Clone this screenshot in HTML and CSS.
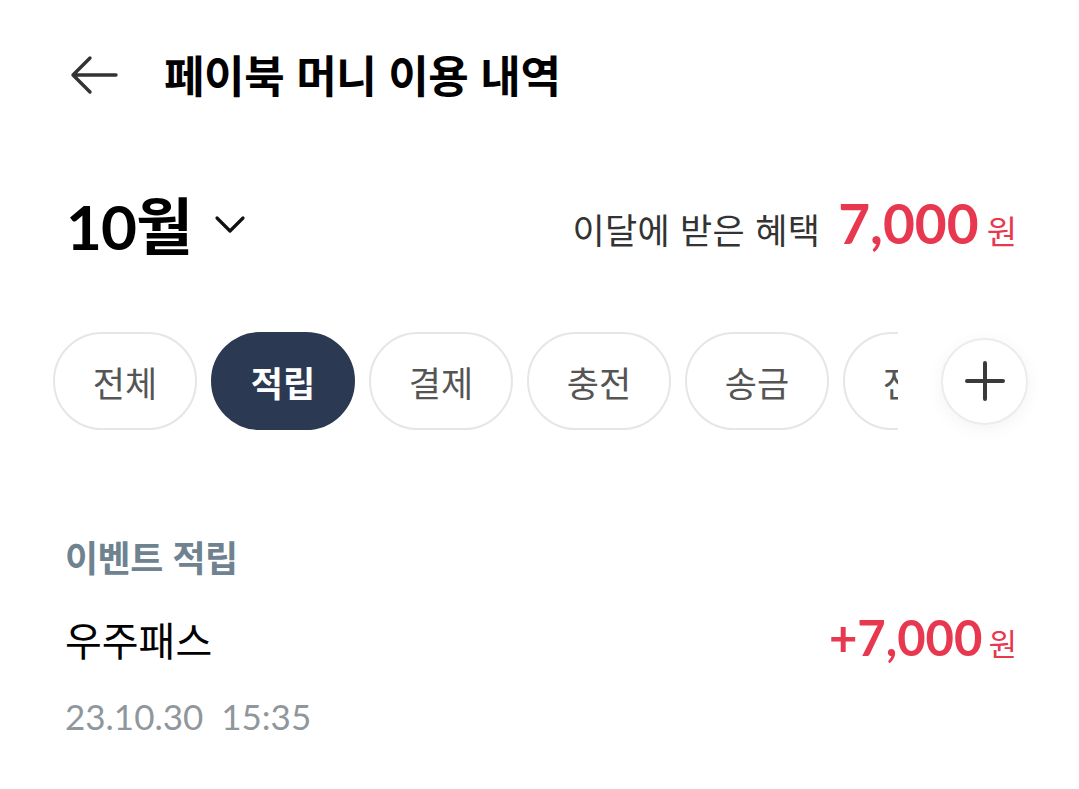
FILE: index.html
```html
<!DOCTYPE html>
<html lang="ko">
<head>
    <meta charset="utf-8">
    <title>페이북 머니 이용 내역</title>
    <link rel="stylesheet" href="styles.css">
</head>
<body>
    <div class="page">
        <header class="top-bar">
            <button class="back-btn" type="button" aria-label="뒤로">
                <svg width="52" height="40" viewBox="0 0 52 40">
                    <path d="M48 20 H5 M22 3 L5 20 L22 37" fill="none" stroke="#333" stroke-width="3.4" stroke-linecap="round" stroke-linejoin="round"/>
                </svg>
            </button>
            <h1 class="title">페이북 머니 이용 내역</h1>
        </header>

        <div class="month-row">
            <div class="month">
                <span class="month-text">10월</span>
                <svg class="chevron" width="32" height="20" viewBox="0 0 32 20">
                    <path d="M3 3 L16 16 L29 3" fill="none" stroke="#111" stroke-width="3.2" stroke-linecap="round" stroke-linejoin="round"/>
                </svg>
            </div>
            <div class="benefit">
                <span class="benefit-label">이달에 받은 혜택</span>
                <span class="amount">7,000</span><span class="won">원</span>
            </div>
        </div>

        <div class="filter-bar">
            <div class="chips">
                <span class="chip">전체</span>
                <span class="chip active">적립</span>
                <span class="chip">결제</span>
                <span class="chip">충전</span>
                <span class="chip">송금</span>
                <span class="chip">전환</span>
            </div>
            <div class="more-wrap">
                <button class="more-btn" type="button" aria-label="더보기">
                    <svg width="40" height="40" viewBox="0 0 40 40">
                        <path d="M20 2 V38 M2 20 H38" stroke="#3a3a3a" stroke-width="4" stroke-linecap="round"/>
                    </svg>
                </button>
            </div>
        </div>

        <section class="history">
            <h2 class="group-label">이벤트 적립</h2>
            <div class="item">
                <div class="item-row">
                    <span class="item-name">우주패스</span>
                    <span class="item-amount"><span class="plus-amount">+7,000</span><span class="won small">원</span></span>
                </div>
                <div class="item-date">23.10.30&nbsp;&nbsp;15:35</div>
            </div>
        </section>
    </div>
</body>
</html>
```

FILE: styles.css
```css
* {
    box-sizing: border-box;
}

body {
    margin: 0;
    background-color: #fff;
    font-family: "Lato", "Noto Sans CJK KR", sans-serif;
    color: #111;
}

.page {
    width: 1079px;
    height: 789px;
    overflow: hidden;
}

.top-bar {
    display: flex;
    align-items: center;
    height: 150px;
    padding: 0 0 0 68px;
}

.back-btn {
    border: none;
    background: none;
    padding: 0;
    width: 52px;
    height: 40px;
    margin-right: 44px;
}

.title {
    margin: 0;
    font-family: "Noto Sans CJK KR", sans-serif;
    font-size: 44px;
    font-weight: 700;
    letter-spacing: -0.4px;
    color: #000;
    position: relative;
    top: -1px;
}

.month-row {
    display: flex;
    align-items: center;
    justify-content: space-between;
    padding: 0 62px 0 66px;
    height: 145px;
}

.month {
    display: flex;
    align-items: center;
}

.month-text {
    font-family: "Lato", "Noto Sans CJK KR", sans-serif;
    font-size: 62px;
    font-weight: 700;
    letter-spacing: -1px;
    color: #000;
}

.chevron {
    margin-left: 22px;
    margin-top: 4px;
}

.benefit {
    display: flex;
    align-items: baseline;
}

.benefit-label {
    font-family: "Noto Sans CJK KR", sans-serif;
    font-size: 35px;
    letter-spacing: 0.3px;
    color: #333;
    margin-right: 18px;
}

.amount {
    font-size: 55px;
    font-weight: 700;
    color: #e8384f;
}

.won {
    font-family: "Noto Sans CJK KR", sans-serif;
    font-size: 33px;
    color: #e8384f;
    margin-left: 8px;
}

.filter-bar {
    position: relative;
    height: 98px;
    margin-top: 37px;
    padding-left: 53px;
}

.chips {
    display: flex;
    gap: 14px;
    width: 845px;
    overflow: hidden;
}

.chip {
    flex: none;
    width: 144px;
    height: 98px;
    border: 2px solid #e6e6e6;
    border-radius: 49px;
    display: flex;
    align-items: center;
    justify-content: center;
    font-family: "Noto Sans CJK KR", sans-serif;
    font-size: 35px;
    color: #555;
}

.chip.active {
    background-color: #2b3a52;
    border-color: #2b3a52;
    color: #fff;
    font-weight: 700;
}

.more-wrap {
    position: absolute;
    right: 0;
    top: -10px;
    width: 181px;
    height: 118px;
    background: linear-gradient(to right, rgba(255, 255, 255, 0) 0, #fff 12px);
    display: flex;
    align-items: center;
    padding-left: 43px;
}

.more-btn {
    width: 87px;
    height: 87px;
    border-radius: 50%;
    border: 2px solid #ececec;
    background-color: #fff;
    box-shadow: 0 4px 18px rgba(0, 0, 0, 0.05);
    display: flex;
    align-items: center;
    justify-content: center;
    padding: 0;
}

.history {
    padding: 0 62px 0 65px;
    margin-top: 100px;
}

.group-label {
    margin: 0;
    font-family: "Noto Sans CJK KR", sans-serif;
    font-size: 36px;
    font-weight: 700;
    color: #6f8290;
    letter-spacing: -0.5px;
    line-height: 52px;
}

.item-row {
    display: flex;
    justify-content: space-between;
    align-items: baseline;
    margin-top: 26px;
}

.item-name {
    font-family: "Noto Sans CJK KR", sans-serif;
    font-size: 40px;
    color: #000;
}

.plus-amount {
    font-size: 49px;
    font-weight: 700;
    color: #e8384f;
}

.won.small {
    font-size: 31px;
    margin-left: 6px;
}

.item-date {
    margin-top: 27px;
    font-size: 35px;
    color: #8f979d;
}
```
